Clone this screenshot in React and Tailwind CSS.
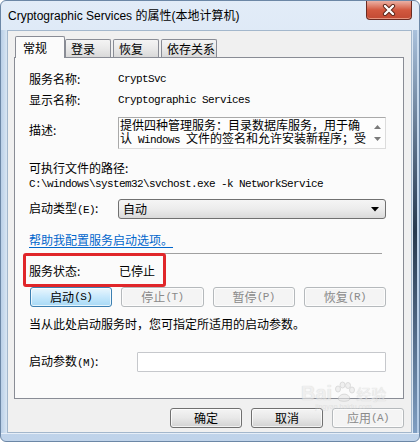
import React from "react";

const mono = "font-['Liberation_Mono','Noto_Sans_CJK_SC',monospace] text-[11px] tracking-[-0.6px]";

function Paren({ children }) {
  return <span className={mono}>{children}</span>;
}

function Btn({ children, kind = "normal", className = "" }) {
  const styles = {
    normal:
      "border-[#707070] bg-gradient-to-b from-[#f4f4f4] via-[#e8e8e8] to-[#d2d2d2] text-black",
    hot: "border-[#3c7fb1] bg-gradient-to-b from-[#eaf6fd] via-[#c6e8fc] to-[#a7d9f5] text-black",
    disabled: "border-[#b5b9bc] bg-[#f4f4f4] text-[#8a8a8a]",
  };
  return (
    <div
      className={`h-[20px] flex items-center justify-center rounded-[3px] border shadow-[inset_0_0_0_1px_rgba(255,255,255,0.7)] leading-none ${styles[kind]} ${className}`}
    >
      {children}
    </div>
  );
}

function CloseBtn() {
  return (
    <div className="mr-[7px] w-[46px] h-[19px] rounded-b-[4px] border border-t-0 border-[#6b2b22] bg-gradient-to-b from-[#eab0a4] via-[#d2583f] to-[#c24a33] flex items-center justify-center shadow-[inset_0_-1px_0_rgba(255,200,180,0.6)]">
      <svg width="14" height="12" viewBox="0 0 14 12">
        <path d="M3 2 L11 10 M11 2 L3 10" stroke="#5a2418" strokeWidth="4.2" strokeLinecap="round" />
        <path d="M3 2 L11 10 M11 2 L3 10" stroke="#ffffff" strokeWidth="2.4" strokeLinecap="round" />
      </svg>
    </div>
  );
}

function Tab({ children, selected, className = "" }) {
  if (selected) {
    return (
      <div className={`h-[22px] w-[50px] pl-[7px] pt-[2px] border border-b-0 border-[#898c95] bg-[#fbfbfb] rounded-t-[2px] ${className}`}>
        {children}
      </div>
    );
  }
  return (
    <div
      className={`h-[18px] mb-[1px] pl-[5px] leading-[17px] border border-b-0 border-[#898c95] rounded-t-[2px] bg-gradient-to-b from-[#f4f4f4] via-[#e9e9e9] to-[#d9d9d9] ${className}`}
    >
      {children}
    </div>
  );
}

function ArrowDown({ color = "#000" }) {
  return (
    <svg width="8" height="5" viewBox="0 0 8 5">
      <path d="M0 0 H8 L4 4.5 Z" fill={color} />
    </svg>
  );
}

export default function App() {
  return (
    <div className="relative w-[420px] h-[442px] flex flex-col overflow-hidden rounded-[6px] border border-[#6c87a6] bg-gradient-to-b from-[#e2ecf8] via-[#ccdcee] to-[#bfd3ea] font-['Noto_Sans_CJK_SC',sans-serif] text-[12px] text-black">
      {/* Title bar */}
      <div className="h-[29px] shrink-0 flex justify-between">
        <div className="pl-[7px] pt-[6px] leading-[18px] font-['Liberation_Sans','Noto_Sans_CJK_SC',sans-serif] text-[12px] text-black">
          Cryptographic Services 的属性(本地计算机)
        </div>
        <CloseBtn />
      </div>

      <div className="flex h-[403px]">
        <div className="w-[6px] bg-gradient-to-r from-[#b9cfe7] to-[#d9e6f3]" />
        {/* Client area */}
        <div className="w-[405px] h-[403px] border border-[#a3b7cc] bg-[#f0f0f0] pt-[5px] pl-[6px] pr-[7px] flex flex-col">
          {/* Tabs */}
          <div className="relative z-10 h-[22px] -mb-px flex items-end">
            <Tab selected className="ml-[1px]">常规</Tab>
            <Tab className="w-[46px]">登录</Tab>
            <Tab className="w-[46px] ml-[2px]">恢复</Tab>
            <Tab className="w-[56px] ml-[2px]">依存关系</Tab>
          </div>

          {/* Panel */}
          <div className="relative w-[390px] h-[342px] border border-[#898c95] bg-[#fbfbfb] pl-[14px] pt-[13px] flex flex-col">
            <div className="h-[16px] flex items-center">
              <div className="w-[89px]">服务名称:</div>
              <div className={mono}>CryptSvc</div>
            </div>
            <div className="mt-[5px] h-[16px] flex items-center">
              <div className="w-[89px]">显示名称:</div>
              <div className={mono}>Cryptographic Services</div>
            </div>
            <div className="mt-[9px] flex items-start">
              <div className="w-[89px] mt-[5px] h-[16px] leading-[16px]">描述:</div>
              <div className="w-[268px] h-[32px] border border-[#a9a9a9] border-r-[#dcdcdc] border-b-[#dcdcdc] bg-[#fdfdfd] flex">
                <div className="w-[251px] pl-[1px] text-[12px] leading-[13px] whitespace-nowrap">
                  <div>提供四种管理服务：目录数据库服务，用于确</div>
                  <div>
                    认<span className={mono}> Windows </span>文件的签名和允许安装新程序；受
                  </div>
                </div>
                <div className="w-[15px] flex flex-col items-center justify-between py-[7px]">
                  <svg width="7" height="4" viewBox="0 0 7 4">
                    <path d="M0 4 H7 L3.5 0 Z" fill="#7a7a7a" />
                  </svg>
                  <svg width="7" height="4" viewBox="0 0 7 4">
                    <path d="M0 0 H7 L3.5 4 Z" fill="#7a7a7a" />
                  </svg>
                </div>
              </div>
            </div>
            <div className="mt-[11px] h-[16px] leading-[16px]">可执行文件的路径:</div>
            <div className={`h-[16px] leading-[16px] ${mono}`}>
              {"C:\\windows\\system32\\svchost.exe -k NetworkService"}
            </div>
            <div className="mt-[7px] h-[20px] flex items-center">
              <div className="w-[89px]">
                启动类型<Paren>(E)</Paren>:
              </div>
              <div className="w-[268px] h-[20px] rounded-[3px] border border-[#707070] bg-gradient-to-b from-[#f5f5f5] via-[#ececec] to-[#dadada] flex items-center justify-between pl-[4px] pr-[6px]">
                <span>自动</span>
                <ArrowDown />
              </div>
            </div>
            <div className="mt-[13px] h-[16px] leading-[16px] text-[#0066cc] underline underline-offset-[2px]">
              帮助我配置服务启动选项。
            </div>
            <div className="mt-[5px] h-px w-[353px] bg-[#a0a0a0]" />
            <div className="mt-[9px] h-[16px] flex items-center">
              <div className="w-[90px]">服务状态:</div>
              <div>已停止</div>
            </div>
            <div className="mt-[8px] ml-[1px] w-[356px] grid grid-cols-4 gap-[9px]">
              <Btn kind="hot">
                启动<Paren>(S)</Paren>
              </Btn>
              <Btn kind="disabled">
                停止<Paren>(T)</Paren>
              </Btn>
              <Btn kind="disabled">
                暂停<Paren>(P)</Paren>
              </Btn>
              <Btn kind="disabled">
                恢复<Paren>(R)</Paren>
              </Btn>
            </div>
            <div className="mt-[9px] h-[16px] leading-[16px]">当从此处启动服务时，您可指定所适用的启动参数。</div>
            <div className="mt-[20px] h-[20px] flex items-center">
              <div className="w-[108px]">
                启动参数<Paren>(M)</Paren>:
              </div>
              <div className="w-[249px] h-[20px] border border-[#c6c8cc] bg-white rounded-[1px]" />
            </div>

            {/* red annotation box */}
            <div className="absolute left-[8px] top-[195px] w-[143px] h-[34px] border-[3px] border-[#e0262a] rounded-[3px]" />
          </div>

          {/* Bottom buttons */}
          <div className="mt-[9px] flex justify-end gap-[9px]">
            <Btn className="w-[72px]">确定</Btn>
            <Btn className="w-[72px]">取消</Btn>
            <Btn kind="disabled" className="w-[72px]">
              应用<Paren>(A)</Paren>
            </Btn>
          </div>
        </div>
        {/* Right frame */}
        <div className="flex-1 flex">
          <div className="w-[1px] bg-[#dbe7f4]" />
          <div className="w-[4px] bg-gradient-to-b from-[#a9c1dc] via-[#283a50] to-[#7f9ec2]" />
          <div className="flex-1 bg-gradient-to-b from-[#c9dbee] to-[#b3cbe6]" />
        </div>
      </div>
      <div className="flex-1 border-t border-[#e6eef8]" />

      {/* Baidu watermark */}
      <div className="absolute left-[300px] top-[380px] opacity-60 pointer-events-none flex flex-col items-center">
        <div className="flex items-end">
          <span className="font-['Liberation_Sans',sans-serif] font-bold text-[20px] leading-[20px] text-[#e8e8e8] [text-shadow:0_0_1px_#b8b8b8]">
            Bai
          </span>
          <svg width="22" height="22" viewBox="0 0 22 22" className="mx-[1px]">
            <g fill="#e8e8e8" stroke="#bdbdbd" strokeWidth="0.8">
              <ellipse cx="5" cy="8" rx="2.5" ry="3" />
              <ellipse cx="9.5" cy="4" rx="2.5" ry="3" />
              <ellipse cx="15" cy="4.5" rx="2.5" ry="3" />
              <ellipse cx="19" cy="9" rx="2.5" ry="3" />
              <path d="M5 18 C6 12 16 11 17 18 C16 21 6 21 5 18 Z" />
            </g>
          </svg>
          <span className="text-[15px] leading-[18px] text-[#e8e8e8] [text-shadow:0_0_1px_#b8b8b8]">经验</span>
        </div>
        <div className="font-['Liberation_Sans',sans-serif] text-[7px] leading-[8px] text-[#d8d8d8]">jingyan.baidu.com</div>
      </div>
    </div>
  );
}
